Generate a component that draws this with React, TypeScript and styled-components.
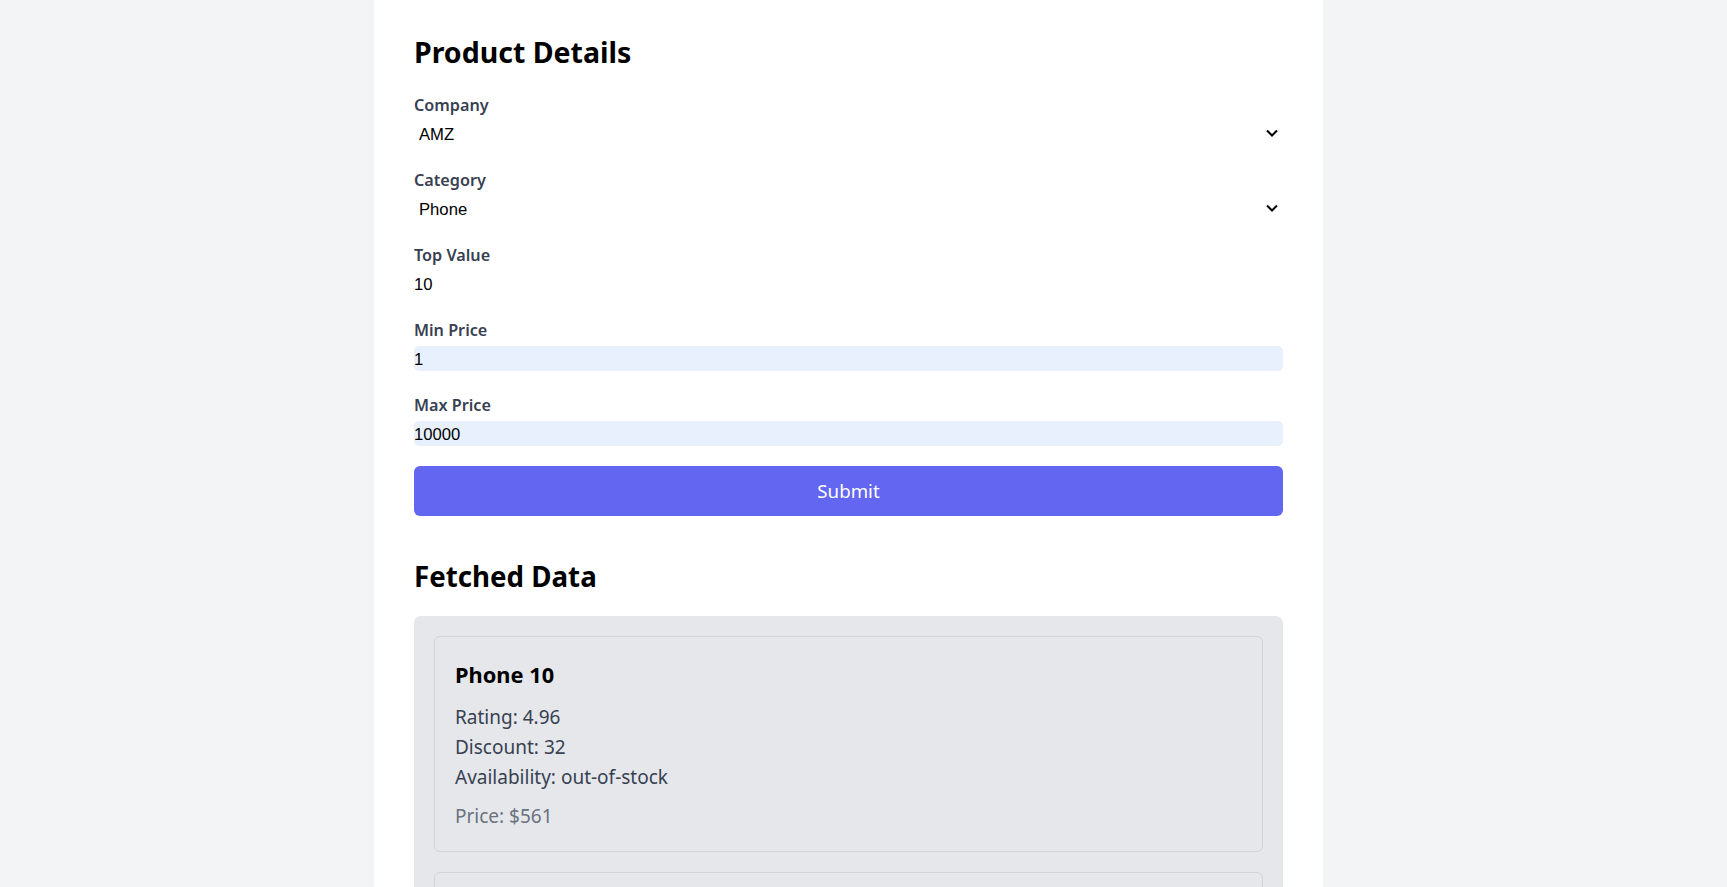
import React from "react";
import styled, { createGlobalStyle } from "styled-components";

const GlobalStyle = createGlobalStyle`
  *, *::before, *::after { box-sizing: border-box; }
  html, body {
    margin: 0;
    padding: 0;
    background: #f3f4f6;
    overflow: hidden;
  }
  body {
    font-family: "Noto Sans", "Open Sans", sans-serif;
    color: #000;
  }
`;

const Page = styled.div`
  display: flex;
  justify-content: center;
  padding-right: 30px;
  min-height: 100vh;
`;

const Panel = styled.main`
  width: 949px;
  min-height: 100vh;
  background: #ffffff;
  padding: 32px 40px 40px;
`;

const Title = styled.h1`
  margin: 0 0 20px;
  font-size: 28.5px;
  line-height: 40px;
  font-weight: 700;
  color: #000;
`;

const Form = styled.form`
  display: flex;
  flex-direction: column;
`;

const Field = styled.div`
  display: flex;
  flex-direction: column;
  gap: 4px;
  margin-bottom: 21px;

  &:last-of-type {
    margin-bottom: 20px;
  }
`;

const Label = styled.label`
  padding-top: 1px;
  font-size: 16.2px;
  line-height: 24px;
  font-weight: 600;
  color: #374151;
`;

const SelectWrap = styled.div`
  display: grid;
  & > * {
    grid-area: 1 / 1;
  }
`;

const Select = styled.select`
  appearance: none;
  -webkit-appearance: none;
  width: 100%;
  height: 25px;
  margin: 0;
  border: none;
  outline: none;
  background: transparent;
  padding: 2px 24px 0 5px;
  font-family: "Liberation Sans", Arial, sans-serif;
  font-size: 16.67px;
  color: #000;
`;

const Chevron = styled.svg`
  justify-self: end;
  align-self: start;
  margin: 8px 5px 0 0;
  pointer-events: none;
`;

const TextInput = styled.input<{ $filled?: boolean }>`
  width: 100%;
  height: 25px;
  margin: 0;
  border: none;
  outline: none;
  border-radius: 5px;
  padding: 2px 0 0 0;
  font-family: "Liberation Sans", Arial, sans-serif;
  font-size: 16.67px;
  color: #000;
  background: ${(p) => (p.$filled ? "#e8f0fe" : "transparent")};
`;

const SubmitButton = styled.button`
  height: 50px;
  width: 100%;
  border: none;
  border-radius: 6px;
  background: #6366f1;
  color: #ffffff;
  font-family: "Noto Sans", "Open Sans", sans-serif;
  font-size: 18.7px;
  line-height: 30px;
  padding: 10px 0;
  cursor: pointer;
`;

const SectionTitle = styled.h2`
  margin: 41px 0 21px;
  font-size: 27.7px;
  line-height: 38px;
  font-weight: 700;
  color: #000;
`;

const Results = styled.section`
  display: flex;
  flex-direction: column;
  gap: 20px;
  padding: 20px;
  background: #e5e7eb;
  border-radius: 7px;
`;

const Card = styled.article`
  border: 1px solid #d1d5db;
  border-radius: 6px;
  padding: 20px;
`;

const CardTitle = styled.h3`
  margin: 0 0 10px;
  font-size: 21.8px;
  line-height: 35px;
  font-weight: 700;
  color: #000;
`;

const CardLine = styled.p`
  margin: 0;
  font-size: 19px;
  line-height: 30px;
  color: #374151;
`;

const Price = styled.p`
  margin: 9px 0 0;
  font-size: 19px;
  line-height: 30px;
  color: #6b7280;
`;

type Product = {
  name: string;
  rating: number;
  discount: number;
  availability: string;
  price: number;
};

const products: Product[] = [
  { name: "Phone 10", rating: 4.96, discount: 32, availability: "out-of-stock", price: 561 },
  { name: "Phone 7", rating: 4.52, discount: 18, availability: "yes", price: 2345 },
];

const ChevronIcon = () => (
  <Chevron width="12" height="8" viewBox="0 0 12 8" aria-hidden="true">
    <polyline
      points="1,1.5 6,6.5 11,1.5"
      fill="none"
      stroke="#000"
      strokeWidth="2"
      strokeLinecap="butt"
      strokeLinejoin="miter"
    />
  </Chevron>
);

export default function App() {
  return (
    <>
      <GlobalStyle />
      <Page>
        <Panel>
          <Title>Product Details</Title>
          <Form onSubmit={(e) => e.preventDefault()}>
            <Field>
              <Label htmlFor="company">Company</Label>
              <SelectWrap>
                <Select id="company" defaultValue="AMZ">
                  <option value="AMZ">AMZ</option>
                  <option value="FLP">FLP</option>
                  <option value="SNP">SNP</option>
                  <option value="MYN">MYN</option>
                  <option value="AZO">AZO</option>
                </Select>
                <ChevronIcon />
              </SelectWrap>
            </Field>
            <Field>
              <Label htmlFor="category">Category</Label>
              <SelectWrap>
                <Select id="category" defaultValue="Phone">
                  <option value="Phone">Phone</option>
                  <option value="Computer">Computer</option>
                  <option value="TV">TV</option>
                  <option value="Earphone">Earphone</option>
                  <option value="Tablet">Tablet</option>
                </Select>
                <ChevronIcon />
              </SelectWrap>
            </Field>
            <Field>
              <Label htmlFor="top">Top Value</Label>
              <TextInput id="top" type="text" defaultValue="10" />
            </Field>
            <Field>
              <Label htmlFor="min">Min Price</Label>
              <TextInput id="min" type="text" defaultValue="1" $filled />
            </Field>
            <Field>
              <Label htmlFor="max">Max Price</Label>
              <TextInput id="max" type="text" defaultValue="10000" $filled />
            </Field>
            <SubmitButton type="submit">Submit</SubmitButton>
          </Form>
          <SectionTitle>Fetched Data</SectionTitle>
          <Results>
            {products.map((p) => (
              <Card key={p.name}>
                <CardTitle>{p.name}</CardTitle>
                <CardLine>Rating: {p.rating}</CardLine>
                <CardLine>Discount: {p.discount}</CardLine>
                <CardLine>Availability: {p.availability}</CardLine>
                <Price>Price: ${p.price}</Price>
              </Card>
            ))}
          </Results>
        </Panel>
      </Page>
    </>
  );
}
